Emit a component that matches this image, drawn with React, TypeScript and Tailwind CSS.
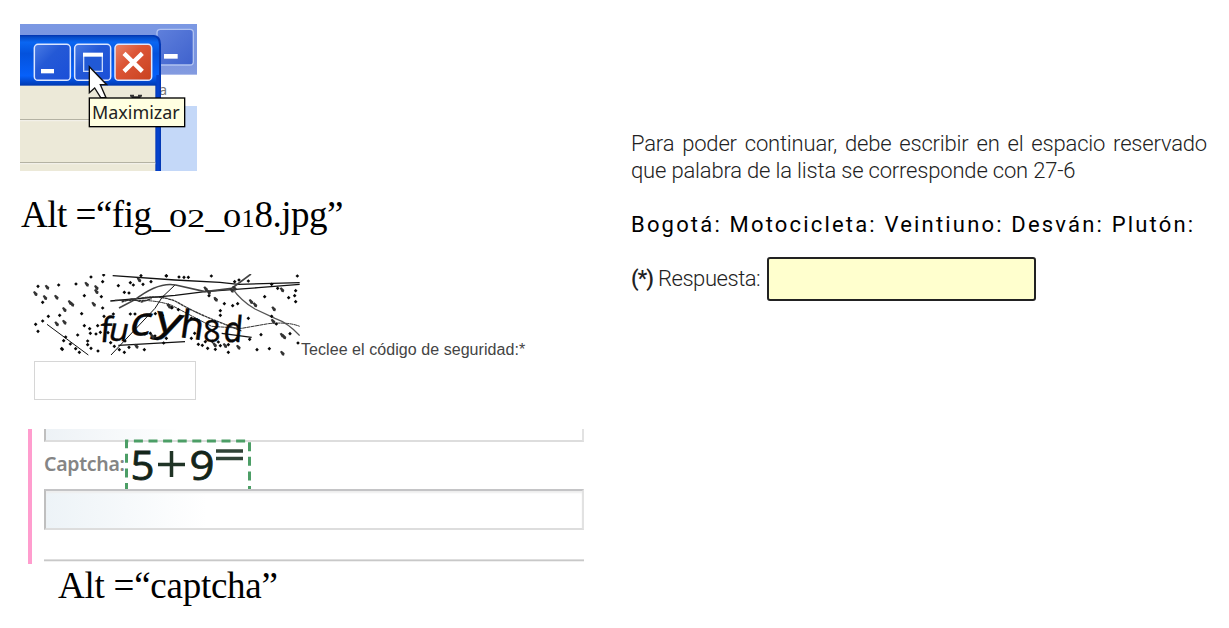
const dotsLeft: [number, number][] = [
  [39, 64], [101, 60], [153, 57], [198, 36], [236, 30], [233, 50], [53, 112], [178, 92], [229, 95], [233, 129], [32, 178], [53, 168], [70, 154], [104, 151], [39, 199], [170, 146], [178, 182], [112, 253], [110, 251], [122, 216], [136, 237], [152, 251], [158, 210], [188, 228], [188, 239], [198, 250], [219, 258], [194, 191], [213, 207], [116, 227], [163, 262], [298, 82], [312, 84], [316, 53], [325, 60], [354, 58], [378, 50], [280, 62], [316, 147], [330, 147], [348, 32], [424, 32], [360, 207], [376, 205], [390, 213], [424, 220], [358, 254], [298, 262], [312, 247], [257, 233], [268, 244], [283, 254], [249, 203], [226, 202], [265, 147], [300, 228], [391, 146], [412, 151], [441, 128], [416, 234], [237, 154], [196, 205], [240, 180], [218, 182],
];
const dotsRight: [number, number][] = [
  [4, 33], [42, 36], [57, 37], [70, 37], [139, 33], [209, 50], [222, 45], [397, 33], [250, 48], [320, 58], [338, 70], [392, 77], [371, 98], [389, 92], [392, 110], [299, 95], [178, 116], [203, 122], [218, 116], [152, 103], [166, 137], [166, 151], [250, 160], [288, 209], [375, 206], [399, 234], [313, 251], [276, 254], [79, 220], [89, 205], [100, 238], [112, 241], [128, 250], [151, 253], [160, 231], [166, 242], [190, 239], [190, 262], [142, 229], [121, 230], [254, 223], [216, 225], [10, 120], [20, 128], [79, 160], [40, 134], [132, 92], [320, 154], [334, 177],
];
const blobs: [number, number][] = [
  [66, 67], [60, 98], [94, 97], [135, 113], [141, 118], [118, 134], [31, 86], [185, 58], [214, 68], [214, 80], [206, 118], [118, 172], [95, 177], [342, 45], [334, 244], [382, 214], [432, 124], [542, 72], [551, 82], [572, 103], [771, 75], [678, 110], [690, 120], [746, 132], [744, 169], [771, 211], [777, 216], [772, 265], [640, 247], [600, 242], [569, 240], [628, 70], [620, 76],
];

function WindowButtons() {
  return (
    <svg width="177" height="147" viewBox="30 27 531 441" className="block shrink-0">
      <defs>
        <linearGradient id="bar" x2="0" y2="1">
          <stop offset="0" stopColor="#0647c0" />
          <stop offset=".12" stopColor="#0a66f2" />
          <stop offset=".35" stopColor="#0452dc" />
          <stop offset=".8" stopColor="#0660fa" />
          <stop offset="1" stopColor="#0038b0" />
        </linearGradient>
        <linearGradient id="back" x2="0" y2="1">
          <stop offset="0" stopColor="#7b98e3" />
          <stop offset=".7" stopColor="#7b95df" />
          <stop offset="1" stopColor="#849be0" />
        </linearGradient>
        <linearGradient id="blue" x2="1" y2="1">
          <stop offset="0" stopColor="#4a7ce4" />
          <stop offset=".4" stopColor="#2459d6" />
          <stop offset="1" stopColor="#1a4fd8" />
        </linearGradient>
        <linearGradient id="pale" x2="1" y2="1">
          <stop offset="0" stopColor="#5f80dc" />
          <stop offset="1" stopColor="#3f62cd" />
        </linearGradient>
        <linearGradient id="red" x2="1" y2="1">
          <stop offset="0" stopColor="#e98468" />
          <stop offset=".4" stopColor="#dc5536" />
          <stop offset="1" stopColor="#c8421f" />
        </linearGradient>
      </defs>
      <rect x="30" y="27" width="531" height="441" fill="#fff" />
      <rect x="30" y="27" width="531" height="152" fill="url(#back)" />
      <rect x="450" y="273" width="111" height="195" fill="#c4d8f8" />
      <rect x="441" y="43" width="109" height="107" rx="10" fill="url(#pale)" stroke="#b0c2f0" strokeWidth="4" />
      <rect x="462" y="117" width="41" height="14" fill="#fff" />
      <text x="448" y="240" className="font-['Noto_Sans'] text-[42px]" fill="#777">a</text>
      <path d="M30 60H432Q453 62 453 88V468H30Z" fill="#0338b5" />
      <path d="M30 64H428Q447 66 447 90V212H30Z" fill="url(#bar)" />
      <path d="M439 180H449V468H439Z" fill="#0542cc" />
      <rect x="30" y="212" width="406" height="256" fill="#ece9d8" />
      <path d="M30 314H436M30 443H436" stroke="#aaa899" strokeWidth="3" />
      <path d="M30 317H436M30 446H436" stroke="#fff" strokeWidth="2" />
      <g strokeWidth="4.5" stroke="#dce6ff">
        <rect x="73" y="88" width="108" height="108" rx="11" fill="url(#blue)" />
        <rect x="194" y="88" width="108" height="108" rx="11" fill="url(#blue)" />
        <rect x="315" y="88" width="110" height="108" rx="11" fill="url(#red)" />
      </g>
      <rect x="93" y="162" width="39" height="13" fill="#fff" />
      <rect x="221" y="116" width="56" height="53" fill="#2159d5" stroke="#c7d8fb" strokeWidth="4" />
      <rect x="219" y="113" width="60" height="12" fill="#fff" />
      <path d="M342 115L397 169M397 115L342 169" stroke="#fff" strokeWidth="13" />
      <path d="M360 239h12v5h12v-5h12v5l-7 6h-22l-7 -6Z" fill="#333" />
      <path d="M238 155V233L254 219L272 248H288L271 209H290Z" fill="#fff" stroke="#111" strokeWidth="4" />
      <rect x="238" y="249" width="286" height="86" fill="#ffffe1" stroke="#000" strokeWidth="4" />
      <text x="246" y="313" textLength="263" lengthAdjust="spacingAndGlyphs" className="font-['Noto_Sans'] text-[53px]" fill="#222">Maximizar</text>
    </svg>
  );
}

function NoiseCaptcha() {
  return (
    <svg width="267" height="82" viewBox="24 27 801 246" className="block shrink-0">
      <g fill="none" stroke="#111" strokeWidth="3">
        <path d="M263 32L450 45L585 52L640 58L824 53" strokeWidth="4" />
        <path d="M256 108L450 91L540 80L700 68L824 58" strokeWidth="4" />
        <path d="M66 178L190 270M258 270L390 130L412 96L450 60" />
        <path d="M282 129L330 104Q400 50 452 60L540 80L620 70L678 27" strokeWidth="5" stroke="#444" />
        <path d="M270 106H370M290 111L320 102L350 111L380 101M350 99Q405 90 450 108Q510 142 560 162T650 198" strokeWidth="4" strokeDasharray="9 1" stroke="#333" />
        <path d="M370 107Q410 110 440 121L510 158L560 184L650 190L730 176Q790 170 824 184" stroke="#333" strokeDasharray="12 1" />
        <path d="M620 68Q650 110 690 132L750 160Q790 174 824 212" strokeWidth="4" stroke="#555" />
        <path d="M280 241L480 230M590 205L680 217" strokeWidth="4" />
      </g>
      <g className="font-['Noto_Sans']" fill="#080808" stroke="#080808" strokeWidth="1">
        <text transform="translate(222 231) skewX(-5)" className="text-[104px]">f</text>
        <text transform="translate(247 226) rotate(3) skewX(-9)" className="text-[96px]">u</text>
        <text transform="translate(308 213) rotate(-3) skewX(-16) scale(1.24 1.08)" className="text-[110px]">c</text>
        <text transform="translate(381 196) rotate(10) skewX(-6) scale(1.45 1)" className="text-[112px]">y</text>
        <text transform="translate(461 216) rotate(8)" className="text-[116px]">h</text>
        <text transform="translate(535 230) scale(.96 1)" className="text-[94px]">8</text>
        <text transform="translate(593 231) skewX(-5) scale(.86 1)" className="text-[108px]">d</text>
      </g>
      <g fill="#080808">
        {dotsLeft.map(([x, y]) => <path key={`${x}-${y}`} d={`M${x - 5.5} ${y}l5.5 -5.5l5.5 5.5l-5.5 5.5Z`} />)}
        {dotsRight.map(([x, y]) => <path key={`${x}-${y}`} d={`M${x + 414.5} ${y}l5.5 -5.5l5.5 5.5l-5.5 5.5Z`} />)}
      </g>
      <g fill="#333">
        {blobs.map(([x, y]) => <path key={`${x}-${y}`} d={`M${x - 7} ${y - 5}l5 -3l9 8l-2 7l-6 -1Z`} />)}
      </g>
    </svg>
  );
}

function SumCaptcha() {
  return (
    <svg width="127" height="50" viewBox="0 0 127 50" className="block overflow-visible">
      <path d="M1.500 50V2H124.500V50" fill="none" stroke="#4c9e66" strokeWidth="3" strokeDasharray="9 5.6" strokeDashoffset="3" />
      <g className="font-['Open_Sans']" fill="#13251a" stroke="#13251a" strokeWidth=".8">
        <text x="5.500" y="40.500" textLength="24" lengthAdjust="spacingAndGlyphs" className="text-[41px]">5</text>
        <text x="64.500" y="40.500" textLength="25" lengthAdjust="spacingAndGlyphs" className="text-[41px]">9</text>
      </g>
      <path d="M33 25.500H60M46.500 12V38" stroke="#203426" strokeWidth="3.500" />
      <path d="M91 12H118M91 19.500H118" stroke="#304236" strokeWidth="3.500" />
    </svg>
  );
}

function LowDigit({ children }: { children: string }) {
  return <span className="inline-block w-[18px] origin-left scale-x-140 text-[26px] leading-none tracking-normal">{children}</span>;
}

export default function App() {
  return (
    <main className="flex h-[628px] w-[1229px] overflow-hidden bg-white text-black">
      <section className="flex w-[631px] shrink-0 flex-col items-start pt-6">
        <div className="pl-5"><WindowButtons /></div>
        <p className="mt-[19px] ml-[21px] h-[50px] font-['Liberation_Serif',serif] text-[37px] leading-[50px] tracking-[-0.5px] whitespace-nowrap">
          Alt =“fig_<LowDigit>0</LowDigit><LowDigit>2</LowDigit>_<LowDigit>0</LowDigit><span className="inline-block w-[13px] text-[26px] leading-none tracking-normal">1</span>8.jpg”
        </p>
        <div className="mt-[34px] ml-[33px] flex items-end">
          <NoiseCaptcha />
          <label className="relative top-[3px] pl-px font-['Liberation_Sans',sans-serif] text-base leading-[18px] tracking-[0.06px] whitespace-nowrap text-[#444]">Teclee el código de seguridad:*</label>
        </div>
        <div className="mt-[5px] ml-[34px] h-[39px] w-[162px] border border-[#d6d6d6]" />
        <div className="mt-[29px] ml-7 h-[135px] w-[556px] border-l-4 border-[#ff9dce] pl-3">
          <div className="h-[13px] border-r-2 border-b-2 border-l-2 border-r-[#e2e2e2] border-b-[#dddddd] border-l-[#bfbfbf] bg-linear-to-r from-[#edf2f6] to-white to-25%" />
          <div className="flex h-[47px] items-start">
            <span className="w-[81px] shrink-0 pt-[10px] font-['Noto_Sans',sans-serif] text-[19.5px] leading-6 font-semibold tracking-[-0.3px] whitespace-nowrap text-[#858585]">Captcha:</span>
            <div className="-mt-[3px]"><SumCaptcha /></div>
          </div>
          <div className="h-[41px] border-2 border-t-[#c4c4c6] border-r-[#e2e2e2] border-b-[#dddddd] border-l-[#bfbfbf] bg-linear-to-r from-[#edf3f7] to-white to-30% shadow-[inset_0_2px_2px_#eeeeee]" />
          <div className="mt-[29px] h-[3px] border-y border-t-[#dedede] border-b-[#f0f0f0] bg-[#c8c8c8]" />
        </div>
        <p className="-mt-px ml-[58px] h-[46px] font-['Liberation_Serif',serif] text-[37px] leading-[46px] tracking-[-0.25px] whitespace-nowrap">Alt =“captcha”</p>
      </section>
      <section className="w-[577px] pt-[130px] font-['Roboto',sans-serif] text-[22px]">
        <p className="pr-px text-justify leading-[27px] font-light tracking-[-0.18px] text-[#222]">Para poder continuar, debe escribir en el espacio reservado que palabra de la lista se corresponde con 27-6</p>
        <p className="mt-[27px] leading-[27px] tracking-[2.18px] whitespace-nowrap">Bogotá: Motocicleta: Veintiuno: Desván: Plutón:</p>
        <div className="mt-[19px] flex h-11 items-center">
          <label className="w-[136px] pb-[2px] font-light tracking-[-0.45px] whitespace-nowrap text-[#222]"><span className="font-medium tracking-[-1px]">(*)</span> Respuesta:</label>
          <div className="h-11 w-[269px] rounded-[3px] border-2 border-[#222] bg-[#ffffce]" />
        </div>
      </section>
    </main>
  );
}
